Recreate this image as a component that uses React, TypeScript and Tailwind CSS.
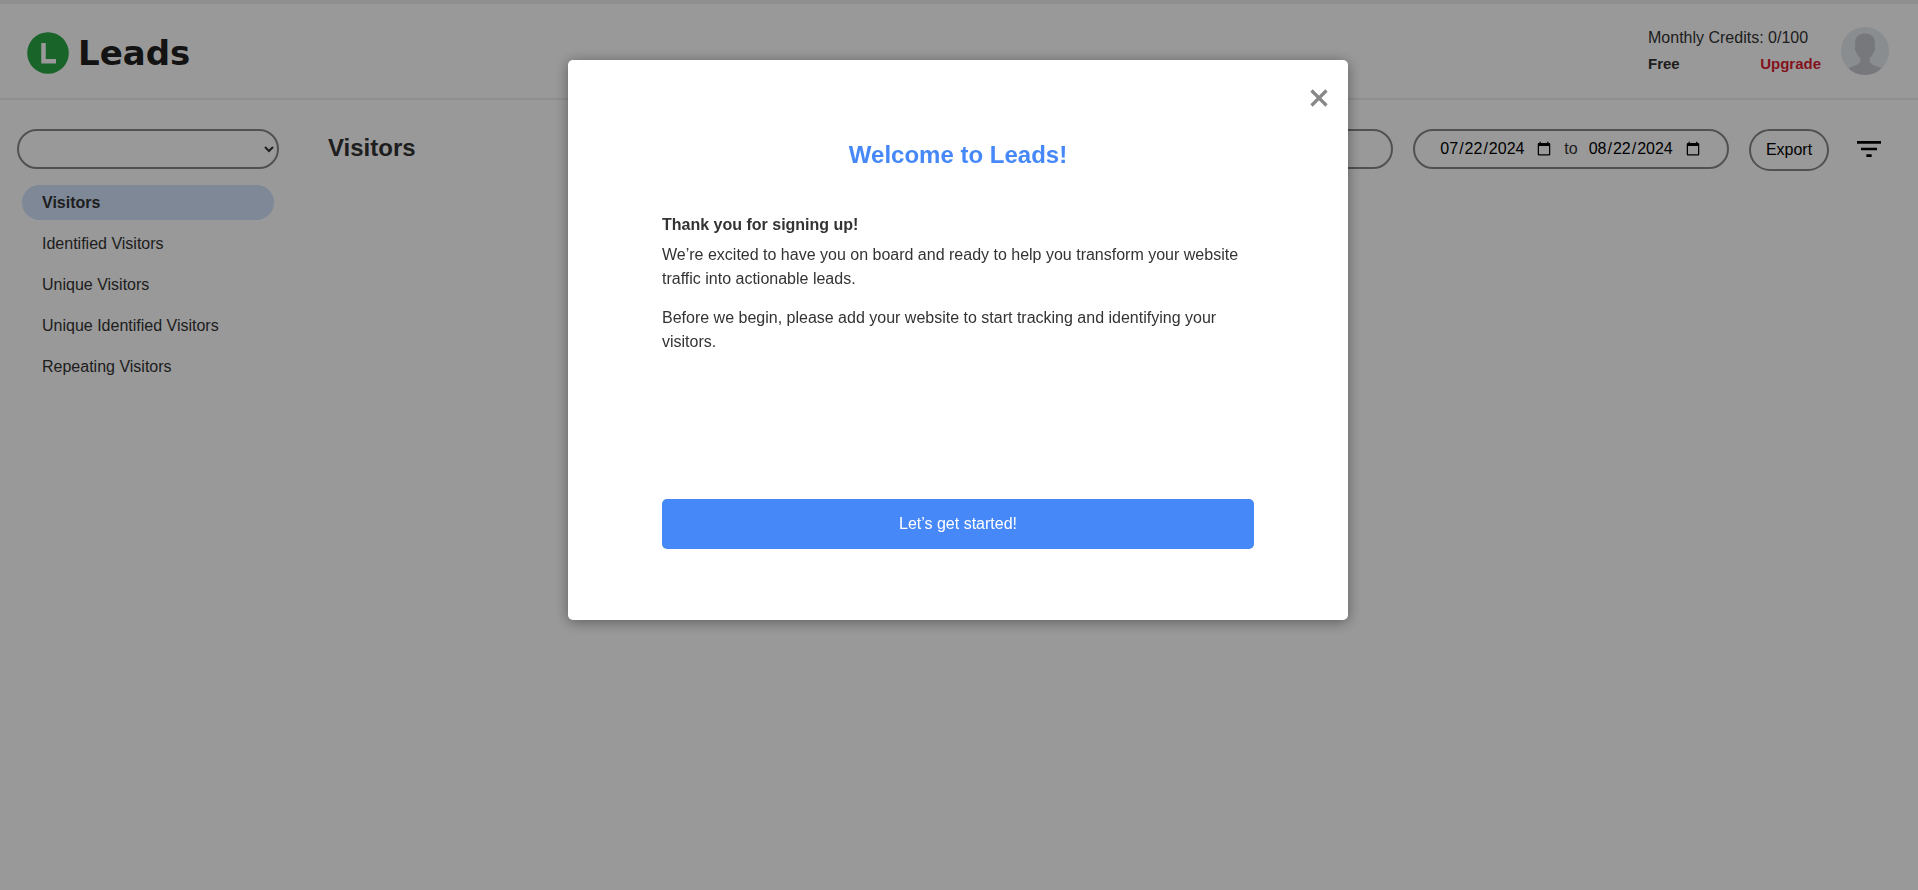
import { useState } from 'react';
import { MdFilterList } from 'react-icons/md';

const menuItems = [
  'Visitors',
  'Identified Visitors',
  'Unique Visitors',
  'Unique Identified Visitors',
  'Repeating Visitors',
];

function Logo() {
  return (
    <a href="#" className="flex items-center gap-[9px]">
      <svg viewBox="0 0 42 42" className="h-[42px] w-[42px]" aria-hidden="true">
        <circle cx="21" cy="21" r="20.8" fill="#28a745" />
        <path d="M16.500 11v18.300H29" fill="none" stroke="#fff" strokeWidth="4.500" />
      </svg>
      <span className="font-['DejaVu_Sans',sans-serif] text-[34px] leading-10 font-bold text-[#212121]">Leads</span>
    </a>
  );
}

function Avatar() {
  return (
    <svg viewBox="0 0 48 48" className="h-12 w-12 rounded-full" role="img" aria-label="Profile">
      <rect width="48" height="48" fill="#e6ebf1" />
      <path
        d="M24 6.500c-6.500 0-9.800 3.500-9.800 9v4.500c-.8.5-.5 3.600.7 4.200.8 3 2.300 5 4.300 6.600v2.700c0 3-3 4.500-6.200 5.500-3 1-5.200 2-7 3.500v6h36v-6c-1.800-1.500-4-2.500-7-3.500-3.200-1-6.200-2.500-6.200-5.500v-2.700c2-1.600 3.500-3.600 4.300-6.600 1.200-.6 1.500-3.700.7-4.200v-4.500c0-5.500-3.300-9-9.800-9z"
        fill="#c6c8ce"
      />
    </svg>
  );
}

function Header() {
  return (
    <header className="flex h-[100px] items-center justify-between border-t-4 border-b-2 border-[#eee] pt-1 pr-[29px] pl-[27px]">
      <Logo />
      <div className="flex items-center gap-5 pb-1">
        <div className="w-[173px]">
          <p>Monthly Credits: 0/100</p>
          <div className="flex justify-between pt-[3px] text-[15px] font-bold">
            <span>Free</span>
            <a href="#" className="text-[#dc1f33]">Upgrade</a>
          </div>
        </div>
        <Avatar />
      </div>
    </header>
  );
}

function Sidebar() {
  const [active, setActive] = useState('Visitors');

  return (
    <aside className="w-[262px] shrink-0">
      <select
        aria-label="Website"
        className="h-10 w-full rounded-[20px] border-2 border-[#888] bg-white"
      />
      <nav className="mt-4 flex flex-col gap-[6px] px-[5px]">
        {menuItems.map((item) => (
          <a
            key={item}
            href="#"
            onClick={() => setActive(item)}
            className={`flex h-[35px] items-center rounded-[18px] px-5 ${active === item ? 'bg-[#d2e3fc] font-bold' : ''}`}
          >
            {item}
          </a>
        ))}
      </nav>
    </aside>
  );
}

function DateInput({ label, value }: { label: string; value: string }) {
  return (
    <input
      type="date"
      aria-label={label}
      defaultValue={value}
      className="w-[115px] text-black [&::-webkit-calendar-picker-indicator]:ml-0"
    />
  );
}

function Toolbar() {
  return (
    <div className="flex items-start">
      <h1 className="flex-1 text-2xl leading-[38px] font-bold">Visitors</h1>
      <input
        type="search"
        aria-label="Search"
        className="mr-5 h-10 w-[260px] rounded-[20px] border-2 border-[#888] px-4"
      />
      <div className="mr-5 flex h-10 w-[316px] items-center justify-center gap-[10px] rounded-[20px] border-2 border-[#888]">
        <DateInput label="From date" value="2024-07-22" />
        <span>to</span>
        <DateInput label="To date" value="2024-08-22" />
      </div>
      <button type="button" className="mr-6 h-[42px] w-20 rounded-[21px] border-2 border-[#888] text-black">
        Export
      </button>
      <button type="button" aria-label="Filter" className="flex h-10 items-center text-black">
        <MdFilterList className="h-8 w-8" />
      </button>
    </div>
  );
}

function WelcomeModal({ onClose }: { onClose: () => void }) {
  return (
    <div className="fixed inset-0 flex items-start justify-center bg-black/40 pt-[60px] pr-[18px] pl-4">
      <div
        role="dialog"
        aria-labelledby="welcome-title"
        className="relative flex min-h-[560px] w-full max-w-[780px] flex-col rounded-[5px] bg-white px-[94px] pt-[79px] pb-[71px] text-[#333] shadow-[0_2px_14px_rgba(0,0,0,0.4)]"
      >
        <button type="button" aria-label="Close" onClick={onClose} className="absolute top-[29px] right-5 text-[#888]">
          <svg viewBox="0 0 18 18" className="h-[18px] w-[18px]" fill="none" stroke="currentColor" strokeWidth="3.200">
            <path d="M1.500 1.500l15 15M16.500 1.500l-15 15" />
          </svg>
        </button>
        <h2 id="welcome-title" className="text-center text-2xl leading-8 font-bold text-[#4688f7]">
          Welcome to Leads!
        </h2>
        <h3 className="mt-[42px] leading-6 font-bold">Thank you for signing up!</h3>
        <p className="mt-[6px] leading-6">
          We’re excited to have you on board and ready to help you transform your website traffic into actionable leads.
        </p>
        <p className="mt-[15px] leading-6">
          Before we begin, please add your website to start tracking and identifying your visitors.
        </p>
        <button type="button" onClick={onClose} className="mt-auto h-[50px] w-full rounded-[5px] bg-[#4688f7] text-white">
          Let’s get started!
        </button>
      </div>
    </div>
  );
}

export default function App() {
  const [showWelcome, setShowWelcome] = useState(true);

  return (
    <div className="min-h-screen bg-white font-['Liberation_Sans',Arial,sans-serif] text-base text-[#333]">
      <Header />
      <div className="flex gap-[49px] pt-[29px] pr-[33px] pl-[17px]">
        <Sidebar />
        <main className="flex-1">
          <Toolbar />
        </main>
      </div>
      {showWelcome && <WelcomeModal onClose={() => setShowWelcome(false)} />}
    </div>
  );
}
